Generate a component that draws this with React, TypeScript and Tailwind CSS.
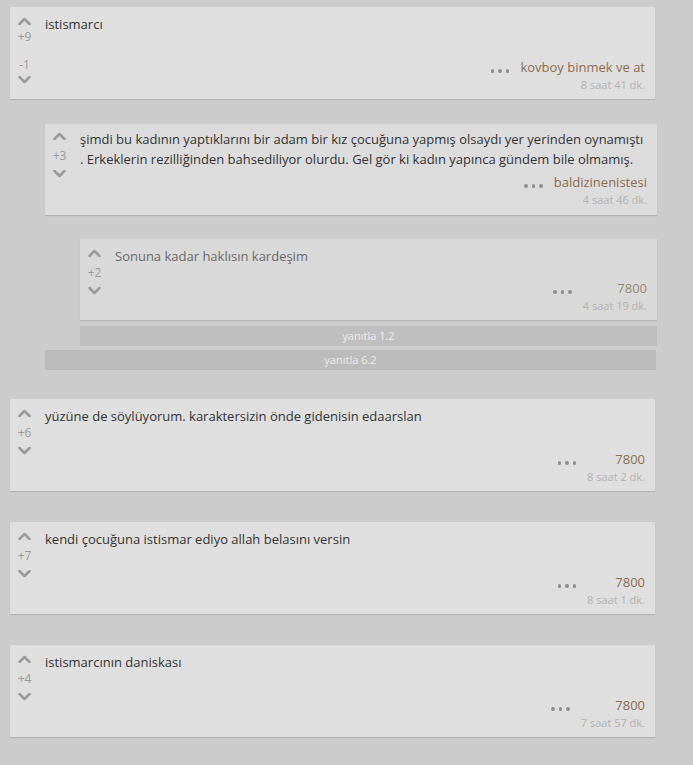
import React from "react";

interface Comment {
  text: React.ReactNode;
  up: number;
  down?: number;
  author: string;
  time: string;
  indent: number; // nesting level
  minH: string; // min height of text block
  faded?: boolean;
}

const comments: Comment[] = [
  {
    text: "istismarcı",
    up: 9,
    down: 1,
    author: "kovboy binmek ve at",
    time: "8 saat 41 dk.",
    indent: 0,
    minH: "min-h-[43px]",
  },
  {
    text: (
      <>
        şimdi bu kadının yaptıklarını bir adam bir kız çocuğuna yapmış olsaydı yer yerinden oynamıştı
        <br />. Erkeklerin rezilliğinden bahsediliyor olurdu. Gel gör ki kadın yapınca gündem bile olmamış.
      </>
    ),
    up: 3,
    author: "baldizinenistesi",
    time: "4 saat 46 dk.",
    indent: 1,
    minH: "min-h-[43px]",
  },
  {
    text: "Sonuna kadar haklısın kardeşim",
    up: 2,
    author: "7800",
    time: "4 saat 19 dk.",
    indent: 2,
    minH: "min-h-[32px]",
    faded: true,
  },
];

const rootComments: Comment[] = [
  {
    text: "yüzüne de söylüyorum. karaktersizin önde gidenisin edaarslan",
    up: 6,
    author: "7800",
    time: "8 saat 2 dk.",
    indent: 0,
    minH: "min-h-[43px]",
  },
  {
    text: "kendi çocuğuna istismar ediyo allah belasını versin",
    up: 7,
    author: "7800",
    time: "8 saat 1 dk.",
    indent: 0,
    minH: "min-h-[43px]",
  },
  {
    text: "istismarcının daniskası",
    up: 4,
    author: "7800",
    time: "7 saat 57 dk.",
    indent: 0,
    minH: "min-h-[43px]",
  },
];

const Chevron = ({ dir }: { dir: "up" | "down" }) => (
  <svg width="13" height="8" viewBox="0 0 13 8" fill="none">
    <polyline
      points={dir === "up" ? "1.5,7 6.5,2 11.5,7" : "1.5,1 6.5,6 11.5,1"}
      stroke="#9a9a9a"
      strokeWidth="2.5"
      strokeLinecap="round"
      strokeLinejoin="round"
    />
  </svg>
);

const Dots = () => (
  <span className="flex gap-[4px] mr-[11px] mt-[12px]">
    <span className="w-[3.5px] h-[3.5px] rounded-full bg-[#8d8d8d]" />
    <span className="w-[3.5px] h-[3.5px] rounded-full bg-[#8d8d8d]" />
    <span className="w-[3.5px] h-[3.5px] rounded-full bg-[#8d8d8d]" />
  </span>
);

const CommentCard: React.FC<{ c: Comment; className?: string }> = ({ c, className }) => {
  const bg = c.indent === 0 ? "bg-[#dfdfdf]" : c.indent === 1 ? "bg-[#dcdcdc]" : "bg-[#d9d9d9]";
  const width = c.indent === 0 ? "w-[645px]" : c.indent === 1 ? "w-[612px] ml-[35px]" : "w-[577px] ml-[70px]";
  const pad = c.indent === 1 ? "pt-[5px] pb-[7px]" : "pt-[7px] pb-[6px]";
  return (
    <div className={`flex ${bg} ${width} shadow-[0_1px_1px_rgba(0,0,0,0.12)] ${pad} ${className ?? ""}`}>
      {/* vote column */}
      <div className="w-[35px] pr-[6px] flex flex-col items-center shrink-0 text-[12px] leading-[16px] text-[#9a9a9a]">
        <div className="mt-[3px] h-[8px]">
          <Chevron dir="up" />
        </div>
        {c.down ? (
          <>
            <span className="mt-[4px]">+{c.up}</span>
            <span className="mt-[12px]">-{c.down}</span>
            <div className="mt-[3px] h-[8px]">
              <Chevron dir="down" />
            </div>
          </>
        ) : (
          <>
            <span className="mt-[8px]">+{c.up}</span>
            <div className="mt-[6px] h-[8px]">
              <Chevron dir="down" />
            </div>
          </>
        )}
      </div>

      {/* content */}
      <div className="flex-1 pr-[10px]">
        <div
          className={`${c.minH} text-[13px] leading-[20px] ${c.faded ? "text-[#6a6a6a]" : "text-[#333333]"}`}
        >
          {c.text}
        </div>
        <div className="flex justify-end items-start">
          <Dots />
          <div className="flex flex-col items-end">
            <span className={`text-[13px] leading-[20px] ${c.faded ? "text-[#9a8672]" : "text-[#8c6d4e]"}`}>
              {c.author}
            </span>
            <span className="text-[11px] leading-[16px] text-[#b2b2b2]">{c.time}</span>
          </div>
        </div>
      </div>
    </div>
  );
};

export default function App() {
  return (
    <div
      className="min-h-screen bg-[#cccccc] pl-[10px] pt-[7px] pb-[27px]"
      style={{ fontFamily: '"Open Sans", "Noto Sans", sans-serif' }}
    >
      <CommentCard c={comments[0]} />
      <CommentCard c={comments[1]} className="mt-[25px]" />
      <CommentCard c={comments[2]} className="mt-[24px]" />

      <div className="ml-[70px] w-[577px] mt-[6px] h-[20px] bg-[#bfbfbf] flex items-center justify-center text-[11px] text-[#ececec]">
        yanıtla 1.2
      </div>
      <div className="ml-[35px] w-[611px] mt-[4px] h-[20px] bg-[#bbbbbb] flex items-center justify-center text-[11px] text-[#ececec]">
        yanıtla 6.2
      </div>

      <CommentCard c={rootComments[0]} className="mt-[29px]" />
      <CommentCard c={rootComments[1]} className="mt-[31px]" />
      <CommentCard c={rootComments[2]} className="mt-[31px]" />
    </div>
  );
}
